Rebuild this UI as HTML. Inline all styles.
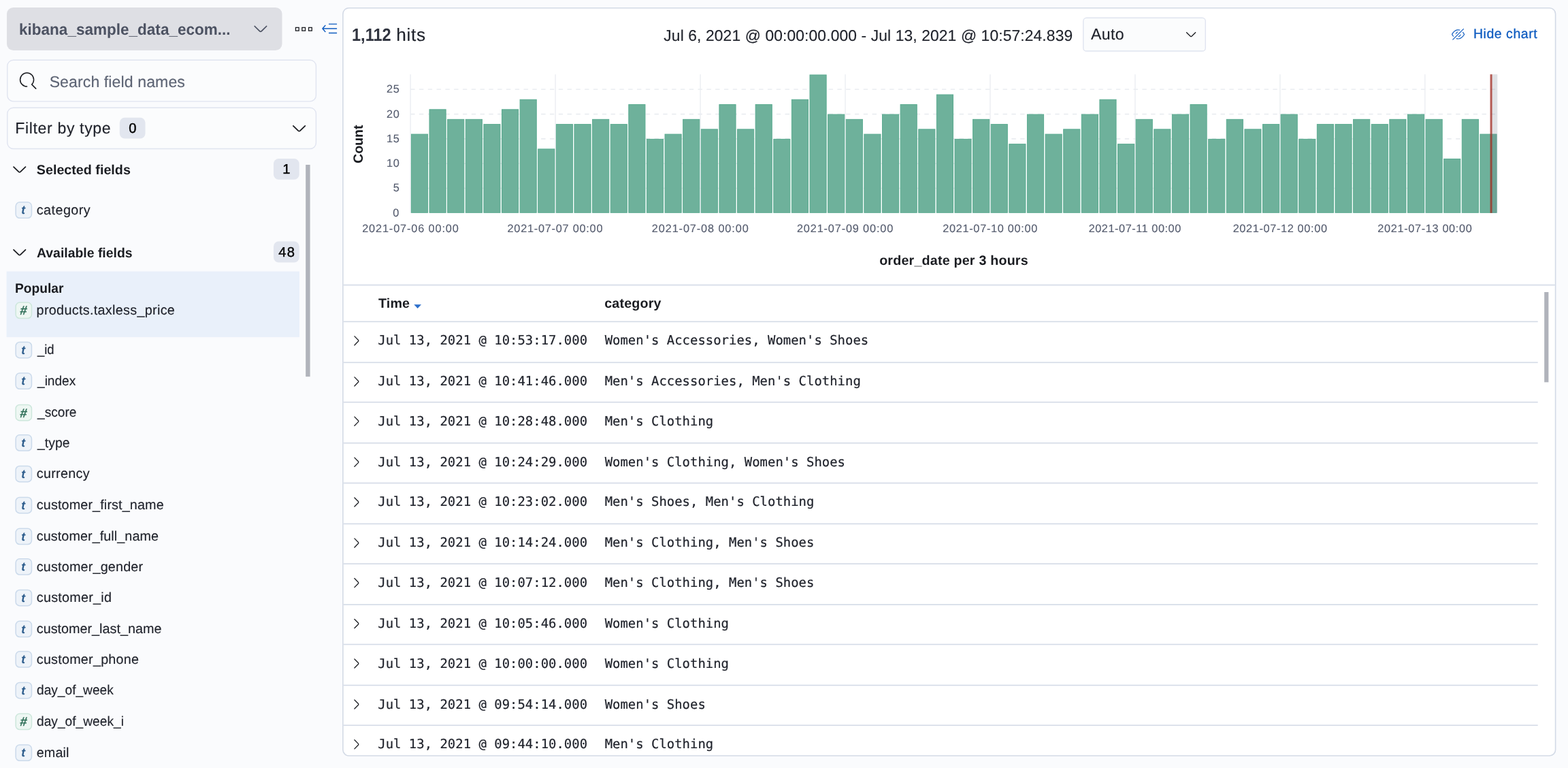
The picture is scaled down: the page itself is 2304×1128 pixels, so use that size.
<!DOCTYPE html>
<html lang="en"><head><meta charset="utf-8"><title>Discover - Kibana</title>
<style>
html,body{margin:0;padding:0}
body{width:2304px;height:1128px;overflow:hidden;background:#fafbfd;position:relative;font-family:"Liberation Sans", sans-serif}
#app{position:absolute;left:0;top:0;width:2304px;height:1128px;overflow:hidden;will-change:transform}
.t{position:absolute;white-space:pre;line-height:1;text-rendering:geometricPrecision}
.g{display:contents}
svg{position:absolute;left:0;top:0;overflow:visible}
.f0{font-family:"Liberation Sans", sans-serif;font-size:23.1px;color:#4c5262;font-weight:700;}
.f1{font-family:"Liberation Sans", sans-serif;font-size:23.1px;color:#5e6575;}
.f2{font-family:"Liberation Sans", sans-serif;font-size:23.1px;color:#1e212a;}
.f3{font-family:"Liberation Sans", sans-serif;font-size:20.2px;color:#000;}
.f4{font-family:"Liberation Sans", sans-serif;font-size:19.7px;color:#1a1c21;font-weight:700;}
.f5{font-family:"Liberation Sans", sans-serif;font-size:19.8px;color:#1e212a;}
.f6{font-family:"Liberation Sans", sans-serif;font-size:17.5px;color:#2c5c8c;font-weight:700;font-style:italic;}
.f7{font-family:"Liberation Sans", sans-serif;font-size:18.4px;color:#2f6f58;font-weight:700;font-style:italic;}
.f8{font-family:"Liberation Sans", sans-serif;font-size:26.2px;color:#30343f;font-weight:700;}
.f9{font-family:"Liberation Sans", sans-serif;font-size:26.2px;color:#1e212a;}
.f10{font-family:"Liberation Sans", sans-serif;font-size:22.8px;color:#1e212a;}
.f11{font-family:"Liberation Sans", sans-serif;font-size:19.5px;color:#0f5cc0;}
.f12{font-family:"Liberation Sans", sans-serif;font-size:16.3px;color:#575e70;}
.f13{font-family:"DejaVu Sans Mono", "Liberation Mono", monospace;font-size:18.9px;color:#1e212a;}

</style></head>
<body>
<div id="app">
<svg width="2304" height="1128" viewBox="0 0 2304 1128">
<rect x="10" y="11" width="404.5" height="63" rx="9.6" fill="#dedfe4"/>
<path transform="translate(370.10 29.65) scale(1.6)" d="M13.069 5.157L8.384 9.768a.546.546 0 01-.768 0L2.93 5.158a.552.552 0 00-.771 0 .53.53 0 000 .759l4.684 4.61c.641.631 1.672.63 2.312 0l4.684-4.61a.53.53 0 000-.76.552.552 0 00-.771 0z" fill="#4c5262"/>
<rect x="434.45" y="40.45" width="4.7" height="4.7" fill="none" stroke="#1a1c21" stroke-width="1.3"/>
<rect x="443.85" y="40.45" width="4.7" height="4.7" fill="none" stroke="#1a1c21" stroke-width="1.3"/>
<rect x="453.55" y="40.45" width="4.7" height="4.7" fill="none" stroke="#1a1c21" stroke-width="1.3"/>
<path d="M483 35.4H495.1M474.4 42H495.1M483 48.5H495.1M478.3 37L473.9 42L478.3 47" fill="none" stroke="#0f5cc0" stroke-width="1.35" stroke-linejoin="round"/>
<rect x="10.8" y="88.3" width="453.6" height="60.6" rx="8.8" fill="#fbfcfd" stroke="#e0e4f0" stroke-width="1.4"/>
<path transform="translate(28.85 106.28) scale(1.54)" d="M11.271 11.978l3.872 3.873a.502.502 0 00.708 0 .502.502 0 000-.708l-3.565-3.564c2.38-2.747 2.267-6.923-.342-9.532-2.73-2.73-7.17-2.73-9.898 0-2.728 2.729-2.728 7.17 0 9.9a6.955 6.955 0 004.949 2.05.5.5 0 000-1 5.96 5.96 0 01-4.242-1.757 6.01 6.01 0 010-8.486 6.004 6.004 0 018.484 0 6.01 6.01 0 010 8.486.5.5 0 00.034.738z" fill="#1a1c21"/>
<rect x="10.8" y="158.3" width="453.6" height="60.2" rx="8.8" fill="#fbfcfd" stroke="#e0e4f0" stroke-width="1.4"/>
<rect x="175.8" y="172.7" width="37.7" height="30.8" rx="7.5" fill="#e2e6ef"/>
<path transform="translate(426.80 175.95) scale(1.6)" d="M13.069 5.157L8.384 9.768a.546.546 0 01-.768 0L2.93 5.158a.552.552 0 00-.771 0 .53.53 0 000 .759l4.684 4.61c.641.631 1.672.63 2.312 0l4.684-4.61a.53.53 0 000-.76.552.552 0 00-.771 0z" fill="#1a1c21"/>
<path transform="translate(15.95 236.20) scale(1.6)" d="M13.069 5.157L8.384 9.768a.546.546 0 01-.768 0L2.93 5.158a.552.552 0 00-.771 0 .53.53 0 000 .759l4.684 4.61c.641.631 1.672.63 2.312 0l4.684-4.61a.53.53 0 000-.76.552.552 0 00-.771 0z" fill="#1a1c21"/>
<rect x="402" y="233" width="37.7" height="30.8" rx="7.5" fill="#e2e6ef"/>
<path transform="translate(15.95 357.95) scale(1.6)" d="M13.069 5.157L8.384 9.768a.546.546 0 01-.768 0L2.93 5.158a.552.552 0 00-.771 0 .53.53 0 000 .759l4.684 4.61c.641.631 1.672.63 2.312 0l4.684-4.61a.53.53 0 000-.76.552.552 0 00-.771 0z" fill="#1a1c21"/>
<rect x="402" y="354.6" width="37.7" height="30.8" rx="7.5" fill="#e2e6ef"/>
<rect x="449.2" y="242" width="6.4" height="311.2" fill="#b0b3bb"/>
<rect x="9.6" y="398.6" width="430.4" height="96.6" fill="#e9f0fa"/>
<rect x="23.15" y="297.05" width="23.3" height="23.3" rx="5.8" fill="#eef3f9" stroke="#cbdaeb" stroke-width="1.5"/>
<rect x="23.15" y="444.25" width="23.3" height="23.3" rx="5.8" fill="#eef7f3" stroke="#cde7dc" stroke-width="1.5"/>
<rect x="23.15" y="502.45" width="23.3" height="23.3" rx="5.8" fill="#eef3f9" stroke="#cbdaeb" stroke-width="1.5"/>
<rect x="23.15" y="548.05" width="23.3" height="23.3" rx="5.8" fill="#eef3f9" stroke="#cbdaeb" stroke-width="1.5"/>
<rect x="23.15" y="594.45" width="23.3" height="23.3" rx="5.8" fill="#eef7f3" stroke="#cde7dc" stroke-width="1.5"/>
<rect x="23.15" y="638.75" width="23.3" height="23.3" rx="5.8" fill="#eef3f9" stroke="#cbdaeb" stroke-width="1.5"/>
<rect x="23.15" y="684.45" width="23.3" height="23.3" rx="5.8" fill="#eef3f9" stroke="#cbdaeb" stroke-width="1.5"/>
<rect x="23.15" y="730.45" width="23.3" height="23.3" rx="5.8" fill="#eef3f9" stroke="#cbdaeb" stroke-width="1.5"/>
<rect x="23.15" y="776.25" width="23.3" height="23.3" rx="5.8" fill="#eef3f9" stroke="#cbdaeb" stroke-width="1.5"/>
<rect x="23.15" y="820.75" width="23.3" height="23.3" rx="5.8" fill="#eef3f9" stroke="#cbdaeb" stroke-width="1.5"/>
<rect x="23.15" y="866.45" width="23.3" height="23.3" rx="5.8" fill="#eef3f9" stroke="#cbdaeb" stroke-width="1.5"/>
<rect x="23.15" y="912.25" width="23.3" height="23.3" rx="5.8" fill="#eef3f9" stroke="#cbdaeb" stroke-width="1.5"/>
<rect x="23.15" y="956.75" width="23.3" height="23.3" rx="5.8" fill="#eef3f9" stroke="#cbdaeb" stroke-width="1.5"/>
<rect x="23.15" y="1002.45" width="23.3" height="23.3" rx="5.8" fill="#eef3f9" stroke="#cbdaeb" stroke-width="1.5"/>
<rect x="23.15" y="1048.25" width="23.3" height="23.3" rx="5.8" fill="#eef7f3" stroke="#cde7dc" stroke-width="1.5"/>
<rect x="23.15" y="1094.05" width="23.3" height="23.3" rx="5.8" fill="#eef3f9" stroke="#cbdaeb" stroke-width="1.5"/>
<rect x="503.9" y="11.7" width="1781.7" height="1098.3" rx="8.8" fill="#fff" stroke="#d3dae6" stroke-width="1.6"/>
<rect x="1591.8" y="26.3" width="179.5" height="48.7" rx="4.6" fill="#fbfcfd" stroke="#e0e4f0" stroke-width="1.4"/>
<path transform="translate(1740.50 41.05) scale(1.2)" d="M13.069 5.157L8.384 9.768a.546.546 0 01-.768 0L2.93 5.158a.552.552 0 00-.771 0 .53.53 0 000 .759l4.684 4.61c.641.631 1.672.63 2.312 0l4.684-4.61a.53.53 0 000-.76.552.552 0 00-.771 0z" fill="#1a1c21"/>
<path transform="translate(2133.00 40.80) scale(1.2)" d="m5.318 13.47.776-.776A6.04 6.04 0 0 0 8 13c1.999 0 3.74-.956 5.225-2.587A12.097 12.097 0 0 0 14.926 8a12.097 12.097 0 0 0-1.701-2.413l-.011-.012.707-.708c1.359 1.476 2.045 2.976 2.058 3.006.014.03.021.064.021.098v.06a.24.24 0 0 1-.02.097C15.952 8.188 13.291 14 8 14a7.03 7.03 0 0 1-2.682-.53ZM2.04 11.092C.707 9.629.034 8.158.02 8.128A.24.24 0 0 1 0 8.03v-.059c0-.034.007-.068.02-.098C.048 7.813 2.709 2 8 2c.962 0 1.837.192 2.625.507l-.78.78A6.039 6.039 0 0 0 8 3c-2 0-3.74.956-5.225 2.587a12.098 12.098 0 0 0-1.701 2.414 12.11 12.11 0 0 0 1.674 2.383l-.708.708ZM8.362 4.77 7.255 5.877a2.262 2.262 0 0 0-1.378 1.378L4.77 8.362A3.252 3.252 0 0 1 8.362 4.77Zm2.86 2.797a3.254 3.254 0 0 1-3.654 3.654l1.06-1.06a2.262 2.262 0 0 0 1.533-1.533l1.06-1.06Zm-9.368 7.287a.5.5 0 0 1-.708-.708l13-13a.5.5 0 0 1 .708.708l-13 13Z" fill="#0f5cc0"/>
<rect x="602.35" y="109.2" width="1.6" height="203.60" fill="#eef0f4"/>
<rect x="815.30" y="109.2" width="1.6" height="203.60" fill="#eef0f4"/>
<rect x="1028.26" y="109.2" width="1.6" height="203.60" fill="#eef0f4"/>
<rect x="1241.21" y="109.2" width="1.6" height="203.60" fill="#eef0f4"/>
<rect x="1454.16" y="109.2" width="1.6" height="203.60" fill="#eef0f4"/>
<rect x="1667.12" y="109.2" width="1.6" height="203.60" fill="#eef0f4"/>
<rect x="1880.07" y="109.2" width="1.6" height="203.60" fill="#eef0f4"/>
<rect x="2093.02" y="109.2" width="1.6" height="203.60" fill="#eef0f4"/>
<path d="M603.15 276.50H2200.30" stroke="#eaedf1" stroke-width="1.6" stroke-dasharray="6.4 6.4" fill="none"/>
<path d="M603.15 240.20H2200.30" stroke="#eaedf1" stroke-width="1.6" stroke-dasharray="6.4 6.4" fill="none"/>
<path d="M603.15 203.90H2200.30" stroke="#eaedf1" stroke-width="1.6" stroke-dasharray="6.4 6.4" fill="none"/>
<path d="M603.15 167.60H2200.30" stroke="#eaedf1" stroke-width="1.6" stroke-dasharray="6.4 6.4" fill="none"/>
<path d="M603.15 131.30H2200.30" stroke="#eaedf1" stroke-width="1.6" stroke-dasharray="6.4 6.4" fill="none"/>
<rect x="604.40" y="197.14" width="24.12" height="115.16" fill="#6eb19b" stroke="#5aab90" stroke-width="1"/>
<rect x="631.02" y="160.84" width="24.12" height="151.46" fill="#6eb19b" stroke="#5aab90" stroke-width="1"/>
<rect x="657.64" y="175.36" width="24.12" height="136.94" fill="#6eb19b" stroke="#5aab90" stroke-width="1"/>
<rect x="684.26" y="175.36" width="24.12" height="136.94" fill="#6eb19b" stroke="#5aab90" stroke-width="1"/>
<rect x="710.88" y="182.62" width="24.12" height="129.68" fill="#6eb19b" stroke="#5aab90" stroke-width="1"/>
<rect x="737.50" y="160.84" width="24.12" height="151.46" fill="#6eb19b" stroke="#5aab90" stroke-width="1"/>
<rect x="764.12" y="146.32" width="24.12" height="165.98" fill="#6eb19b" stroke="#5aab90" stroke-width="1"/>
<rect x="790.73" y="218.92" width="24.12" height="93.38" fill="#6eb19b" stroke="#5aab90" stroke-width="1"/>
<rect x="817.35" y="182.62" width="24.12" height="129.68" fill="#6eb19b" stroke="#5aab90" stroke-width="1"/>
<rect x="843.97" y="182.62" width="24.12" height="129.68" fill="#6eb19b" stroke="#5aab90" stroke-width="1"/>
<rect x="870.59" y="175.36" width="24.12" height="136.94" fill="#6eb19b" stroke="#5aab90" stroke-width="1"/>
<rect x="897.21" y="182.62" width="24.12" height="129.68" fill="#6eb19b" stroke="#5aab90" stroke-width="1"/>
<rect x="923.83" y="153.58" width="24.12" height="158.72" fill="#6eb19b" stroke="#5aab90" stroke-width="1"/>
<rect x="950.45" y="204.40" width="24.12" height="107.90" fill="#6eb19b" stroke="#5aab90" stroke-width="1"/>
<rect x="977.07" y="197.14" width="24.12" height="115.16" fill="#6eb19b" stroke="#5aab90" stroke-width="1"/>
<rect x="1003.69" y="175.36" width="24.12" height="136.94" fill="#6eb19b" stroke="#5aab90" stroke-width="1"/>
<rect x="1030.31" y="189.88" width="24.12" height="122.42" fill="#6eb19b" stroke="#5aab90" stroke-width="1"/>
<rect x="1056.93" y="153.58" width="24.12" height="158.72" fill="#6eb19b" stroke="#5aab90" stroke-width="1"/>
<rect x="1083.55" y="189.88" width="24.12" height="122.42" fill="#6eb19b" stroke="#5aab90" stroke-width="1"/>
<rect x="1110.16" y="153.58" width="24.12" height="158.72" fill="#6eb19b" stroke="#5aab90" stroke-width="1"/>
<rect x="1136.78" y="204.40" width="24.12" height="107.90" fill="#6eb19b" stroke="#5aab90" stroke-width="1"/>
<rect x="1163.40" y="146.32" width="24.12" height="165.98" fill="#6eb19b" stroke="#5aab90" stroke-width="1"/>
<rect x="1190.02" y="110.02" width="24.12" height="202.28" fill="#6eb19b" stroke="#5aab90" stroke-width="1"/>
<rect x="1216.64" y="168.10" width="24.12" height="144.20" fill="#6eb19b" stroke="#5aab90" stroke-width="1"/>
<rect x="1243.26" y="175.36" width="24.12" height="136.94" fill="#6eb19b" stroke="#5aab90" stroke-width="1"/>
<rect x="1269.88" y="197.14" width="24.12" height="115.16" fill="#6eb19b" stroke="#5aab90" stroke-width="1"/>
<rect x="1296.50" y="168.10" width="24.12" height="144.20" fill="#6eb19b" stroke="#5aab90" stroke-width="1"/>
<rect x="1323.12" y="153.58" width="24.12" height="158.72" fill="#6eb19b" stroke="#5aab90" stroke-width="1"/>
<rect x="1349.74" y="189.88" width="24.12" height="122.42" fill="#6eb19b" stroke="#5aab90" stroke-width="1"/>
<rect x="1376.36" y="139.06" width="24.12" height="173.24" fill="#6eb19b" stroke="#5aab90" stroke-width="1"/>
<rect x="1402.97" y="204.40" width="24.12" height="107.90" fill="#6eb19b" stroke="#5aab90" stroke-width="1"/>
<rect x="1429.59" y="175.36" width="24.12" height="136.94" fill="#6eb19b" stroke="#5aab90" stroke-width="1"/>
<rect x="1456.21" y="182.62" width="24.12" height="129.68" fill="#6eb19b" stroke="#5aab90" stroke-width="1"/>
<rect x="1482.83" y="211.66" width="24.12" height="100.64" fill="#6eb19b" stroke="#5aab90" stroke-width="1"/>
<rect x="1509.45" y="168.10" width="24.12" height="144.20" fill="#6eb19b" stroke="#5aab90" stroke-width="1"/>
<rect x="1536.07" y="197.14" width="24.12" height="115.16" fill="#6eb19b" stroke="#5aab90" stroke-width="1"/>
<rect x="1562.69" y="189.88" width="24.12" height="122.42" fill="#6eb19b" stroke="#5aab90" stroke-width="1"/>
<rect x="1589.31" y="168.10" width="24.12" height="144.20" fill="#6eb19b" stroke="#5aab90" stroke-width="1"/>
<rect x="1615.93" y="146.32" width="24.12" height="165.98" fill="#6eb19b" stroke="#5aab90" stroke-width="1"/>
<rect x="1642.55" y="211.66" width="24.12" height="100.64" fill="#6eb19b" stroke="#5aab90" stroke-width="1"/>
<rect x="1669.17" y="175.36" width="24.12" height="136.94" fill="#6eb19b" stroke="#5aab90" stroke-width="1"/>
<rect x="1695.79" y="189.88" width="24.12" height="122.42" fill="#6eb19b" stroke="#5aab90" stroke-width="1"/>
<rect x="1722.41" y="168.10" width="24.12" height="144.20" fill="#6eb19b" stroke="#5aab90" stroke-width="1"/>
<rect x="1749.02" y="153.58" width="24.12" height="158.72" fill="#6eb19b" stroke="#5aab90" stroke-width="1"/>
<rect x="1775.64" y="204.40" width="24.12" height="107.90" fill="#6eb19b" stroke="#5aab90" stroke-width="1"/>
<rect x="1802.26" y="175.36" width="24.12" height="136.94" fill="#6eb19b" stroke="#5aab90" stroke-width="1"/>
<rect x="1828.88" y="189.88" width="24.12" height="122.42" fill="#6eb19b" stroke="#5aab90" stroke-width="1"/>
<rect x="1855.50" y="182.62" width="24.12" height="129.68" fill="#6eb19b" stroke="#5aab90" stroke-width="1"/>
<rect x="1882.12" y="168.10" width="24.12" height="144.20" fill="#6eb19b" stroke="#5aab90" stroke-width="1"/>
<rect x="1908.74" y="204.40" width="24.12" height="107.90" fill="#6eb19b" stroke="#5aab90" stroke-width="1"/>
<rect x="1935.36" y="182.62" width="24.12" height="129.68" fill="#6eb19b" stroke="#5aab90" stroke-width="1"/>
<rect x="1961.98" y="182.62" width="24.12" height="129.68" fill="#6eb19b" stroke="#5aab90" stroke-width="1"/>
<rect x="1988.60" y="175.36" width="24.12" height="136.94" fill="#6eb19b" stroke="#5aab90" stroke-width="1"/>
<rect x="2015.22" y="182.62" width="24.12" height="129.68" fill="#6eb19b" stroke="#5aab90" stroke-width="1"/>
<rect x="2041.84" y="175.36" width="24.12" height="136.94" fill="#6eb19b" stroke="#5aab90" stroke-width="1"/>
<rect x="2068.45" y="168.10" width="24.12" height="144.20" fill="#6eb19b" stroke="#5aab90" stroke-width="1"/>
<rect x="2095.07" y="175.36" width="24.12" height="136.94" fill="#6eb19b" stroke="#5aab90" stroke-width="1"/>
<rect x="2121.69" y="233.44" width="24.12" height="78.86" fill="#6eb19b" stroke="#5aab90" stroke-width="1"/>
<rect x="2148.31" y="175.36" width="24.12" height="136.94" fill="#6eb19b" stroke="#5aab90" stroke-width="1"/>
<rect x="2174.93" y="197.14" width="24.12" height="115.16" fill="#6eb19b" stroke="#5aab90" stroke-width="1"/>
<rect x="2191.05" y="109.2" width="9.25" height="203.60" fill="rgba(105,112,125,0.2)"/>
<rect x="2189.55" y="109.2" width="3" height="203.60" fill="rgba(160,40,30,0.75)"/>
<rect x="504.7" y="417.8" width="1780.1" height="1.6" fill="#d3dae6"/>
<rect x="504.7" y="471.60" width="1755" height="1.6" fill="#d3dae6"/>
<path transform="translate(514.25 490.80) scale(1.2)" d="M5.157 13.069l4.611-4.685a.546.546 0 000-.768L5.158 2.93a.552.552 0 010-.771.53.53 0 01.759 0l4.61 4.684c.631.641.63 1.672 0 2.312l-4.61 4.684a.53.53 0 01-.76 0 .552.552 0 010-.771z" fill="#1a1c21"/>
<rect x="504.7" y="531.60" width="1755" height="1.6" fill="#d3dae6"/>
<path transform="translate(514.25 550.80) scale(1.2)" d="M5.157 13.069l4.611-4.685a.546.546 0 000-.768L5.158 2.93a.552.552 0 010-.771.53.53 0 01.759 0l4.61 4.684c.631.641.63 1.672 0 2.312l-4.61 4.684a.53.53 0 01-.76 0 .552.552 0 010-.771z" fill="#1a1c21"/>
<rect x="504.7" y="589.90" width="1755" height="1.6" fill="#d3dae6"/>
<path transform="translate(514.25 609.10) scale(1.2)" d="M5.157 13.069l4.611-4.685a.546.546 0 000-.768L5.158 2.93a.552.552 0 010-.771.53.53 0 01.759 0l4.61 4.684c.631.641.63 1.672 0 2.312l-4.61 4.684a.53.53 0 01-.76 0 .552.552 0 010-.771z" fill="#1a1c21"/>
<rect x="504.7" y="649.90" width="1755" height="1.6" fill="#d3dae6"/>
<path transform="translate(514.25 669.10) scale(1.2)" d="M5.157 13.069l4.611-4.685a.546.546 0 000-.768L5.158 2.93a.552.552 0 010-.771.53.53 0 01.759 0l4.61 4.684c.631.641.63 1.672 0 2.312l-4.61 4.684a.53.53 0 01-.76 0 .552.552 0 010-.771z" fill="#1a1c21"/>
<rect x="504.7" y="708.70" width="1755" height="1.6" fill="#d3dae6"/>
<path transform="translate(514.25 727.90) scale(1.2)" d="M5.157 13.069l4.611-4.685a.546.546 0 000-.768L5.158 2.93a.552.552 0 010-.771.53.53 0 01.759 0l4.61 4.684c.631.641.63 1.672 0 2.312l-4.61 4.684a.53.53 0 01-.76 0 .552.552 0 010-.771z" fill="#1a1c21"/>
<rect x="504.7" y="768.60" width="1755" height="1.6" fill="#d3dae6"/>
<path transform="translate(514.25 787.80) scale(1.2)" d="M5.157 13.069l4.611-4.685a.546.546 0 000-.768L5.158 2.93a.552.552 0 010-.771.53.53 0 01.759 0l4.61 4.684c.631.641.63 1.672 0 2.312l-4.61 4.684a.53.53 0 01-.76 0 .552.552 0 010-.771z" fill="#1a1c21"/>
<rect x="504.7" y="827.30" width="1755" height="1.6" fill="#d3dae6"/>
<path transform="translate(514.25 846.50) scale(1.2)" d="M5.157 13.069l4.611-4.685a.546.546 0 000-.768L5.158 2.93a.552.552 0 010-.771.53.53 0 01.759 0l4.61 4.684c.631.641.63 1.672 0 2.312l-4.61 4.684a.53.53 0 01-.76 0 .552.552 0 010-.771z" fill="#1a1c21"/>
<rect x="504.7" y="887.20" width="1755" height="1.6" fill="#d3dae6"/>
<path transform="translate(514.25 906.40) scale(1.2)" d="M5.157 13.069l4.611-4.685a.546.546 0 000-.768L5.158 2.93a.552.552 0 010-.771.53.53 0 01.759 0l4.61 4.684c.631.641.63 1.672 0 2.312l-4.61 4.684a.53.53 0 01-.76 0 .552.552 0 010-.771z" fill="#1a1c21"/>
<rect x="504.7" y="945.70" width="1755" height="1.6" fill="#d3dae6"/>
<path transform="translate(514.25 964.90) scale(1.2)" d="M5.157 13.069l4.611-4.685a.546.546 0 000-.768L5.158 2.93a.552.552 0 010-.771.53.53 0 01.759 0l4.61 4.684c.631.641.63 1.672 0 2.312l-4.61 4.684a.53.53 0 01-.76 0 .552.552 0 010-.771z" fill="#1a1c21"/>
<rect x="504.7" y="1005.70" width="1755" height="1.6" fill="#d3dae6"/>
<path transform="translate(514.25 1024.90) scale(1.2)" d="M5.157 13.069l4.611-4.685a.546.546 0 000-.768L5.158 2.93a.552.552 0 010-.771.53.53 0 01.759 0l4.61 4.684c.631.641.63 1.672 0 2.312l-4.61 4.684a.53.53 0 01-.76 0 .552.552 0 010-.771z" fill="#1a1c21"/>
<rect x="504.7" y="1064.50" width="1755" height="1.6" fill="#d3dae6"/>
<path transform="translate(514.25 1083.70) scale(1.2)" d="M5.157 13.069l4.611-4.685a.546.546 0 000-.768L5.158 2.93a.552.552 0 010-.771.53.53 0 01.759 0l4.61 4.684c.631.641.63 1.672 0 2.312l-4.61 4.684a.53.53 0 01-.76 0 .552.552 0 010-.771z" fill="#1a1c21"/>
<path d="M608.3 447.3H619L613.65 453Z" fill="#2c6fcb"/>
<rect x="2269.2" y="429" width="6.2" height="132.4" fill="#b0b3bb"/>
</svg>
<aside class="g" aria-label="Field list">
<span class="t f0" style="left:27.63px;top:32px;transform:scaleX(0.9756);transform-origin:0 0;">kibana_sample_data_ecom...</span>
<span class="t f1" style="left:72.64px;top:109px;letter-spacing:0.092px;-webkit-text-stroke:0.15px #5e6575;">Search field names</span>
<span class="t f2" style="left:22.37px;top:177px;letter-spacing:0.619px;-webkit-text-stroke:0.15px #1e212a;">Filter by type</span>
<span class="t f3" style="left:189.31px;top:179px;-webkit-text-stroke:0.45px #000;">0</span>
<span class="t f4" style="left:53.8px;top:241px;letter-spacing:0.012px;">Selected fields</span>
<span class="t f3" style="left:415.14px;top:239px;-webkit-text-stroke:0.45px #000;">1</span>
<span class="t f4" style="left:53.93px;top:363px;transform:scaleX(0.9857);transform-origin:0 0;">Available fields</span>
<span class="t f3" style="left:409.2px;top:361px;letter-spacing:1.298px;-webkit-text-stroke:0.45px #000;">48</span>
<span class="t f4" style="left:21.64px;top:415px;transform:scaleX(0.9742);transform-origin:0 0;">Popular</span>
<span class="t f5" style="left:53.77px;top:300px;letter-spacing:0.431px;-webkit-text-stroke:0.15px #1e212a;">category</span>
<span class="t f6" style="left:31.18px;top:300px;">t</span>
<span class="t f5" style="left:53.62px;top:447px;letter-spacing:0.306px;-webkit-text-stroke:0.15px #1e212a;">products.taxless_price</span>
<span class="t f7" style="left:29.28px;top:447px;transform:skewX(-8deg);transform-origin:50% 60%;-webkit-text-stroke:0.25px #2f6f58;">#</span>
<span class="t f5" style="left:54.87px;top:505px;transform:scaleX(0.9333);transform-origin:0 0;-webkit-text-stroke:0.15px #1e212a;">_id</span>
<span class="t f6" style="left:31.18px;top:506px;">t</span>
<span class="t f5" style="left:54.88px;top:551px;transform:scaleX(0.9659);transform-origin:0 0;-webkit-text-stroke:0.15px #1e212a;">_index</span>
<span class="t f6" style="left:31.18px;top:551px;">t</span>
<span class="t f5" style="left:54.88px;top:597px;transform:scaleX(0.9689);transform-origin:0 0;-webkit-text-stroke:0.15px #1e212a;">_score</span>
<span class="t f7" style="left:29.28px;top:598px;transform:skewX(-8deg);transform-origin:50% 60%;-webkit-text-stroke:0.25px #2f6f58;">#</span>
<span class="t f5" style="left:54.88px;top:642px;transform:scaleX(0.9811);transform-origin:0 0;-webkit-text-stroke:0.15px #1e212a;">_type</span>
<span class="t f6" style="left:31.18px;top:642px;">t</span>
<span class="t f5" style="left:53.77px;top:687px;letter-spacing:0.288px;-webkit-text-stroke:0.15px #1e212a;">currency</span>
<span class="t f6" style="left:31.18px;top:688px;">t</span>
<span class="t f5" style="left:53.77px;top:733px;letter-spacing:0.125px;-webkit-text-stroke:0.15px #1e212a;">customer_first_name</span>
<span class="t f6" style="left:31.18px;top:734px;">t</span>
<span class="t f5" style="left:53.77px;top:779px;letter-spacing:0.069px;-webkit-text-stroke:0.15px #1e212a;">customer_full_name</span>
<span class="t f6" style="left:31.18px;top:780px;">t</span>
<span class="t f5" style="left:53.77px;top:824px;letter-spacing:0.17px;-webkit-text-stroke:0.15px #1e212a;">customer_gender</span>
<span class="t f6" style="left:31.18px;top:824px;">t</span>
<span class="t f5" style="left:53.77px;top:869px;letter-spacing:0.239px;-webkit-text-stroke:0.15px #1e212a;">customer_id</span>
<span class="t f6" style="left:31.18px;top:870px;">t</span>
<span class="t f5" style="left:53.77px;top:915px;-webkit-text-stroke:0.15px #1e212a;">customer_last_name</span>
<span class="t f6" style="left:31.18px;top:916px;">t</span>
<span class="t f5" style="left:53.77px;top:960px;letter-spacing:0.224px;-webkit-text-stroke:0.15px #1e212a;">customer_phone</span>
<span class="t f6" style="left:31.18px;top:960px;">t</span>
<span class="t f5" style="left:53.83px;top:1005px;transform:scaleX(0.9672);transform-origin:0 0;-webkit-text-stroke:0.15px #1e212a;">day_of_week</span>
<span class="t f6" style="left:31.18px;top:1006px;">t</span>
<span class="t f5" style="left:53.82px;top:1051px;transform:scaleX(0.9691);transform-origin:0 0;-webkit-text-stroke:0.15px #1e212a;">day_of_week_i</span>
<span class="t f7" style="left:29.28px;top:1051px;transform:skewX(-8deg);transform-origin:50% 60%;-webkit-text-stroke:0.25px #2f6f58;">#</span>
<span class="t f5" style="left:53.77px;top:1097px;letter-spacing:0.104px;-webkit-text-stroke:0.15px #1e212a;">email</span>
<span class="t f6" style="left:31.18px;top:1097px;">t</span>
</aside>
<header class="g" aria-label="Result summary">
<span class="t f8" style="left:517.01px;top:38px;transform:scaleX(0.899);transform-origin:0 0;">1,112</span>
<span class="t f9" style="left:582.13px;top:38px;letter-spacing:0.703px;-webkit-text-stroke:0.15px #1e212a;">hits</span>
<span class="t f10" style="left:975.3px;top:41px;letter-spacing:0.127px;-webkit-text-stroke:0.15px #1e212a;">Jul 6, 2021 @ 00:00:00.000 - Jul 13, 2021 @ 10:57:24.839</span>
<span class="t f2" style="left:1602.94px;top:39px;letter-spacing:0.351px;-webkit-text-stroke:0.15px #1e212a;">Auto</span>
<span class="t f11" style="left:2164.9px;top:41px;letter-spacing:0.538px;-webkit-text-stroke:0.3px #0f5cc0;">Hide chart</span>
</header>
<section class="g" aria-label="Histogram">
<span class="t f12" style="left:577.19px;top:305px;letter-spacing:0.5px;-webkit-text-stroke:0.15px #575e70;">0</span>
<span class="t f12" style="left:577.76px;top:268px;letter-spacing:0.5px;-webkit-text-stroke:0.15px #575e70;">5</span>
<span class="t f12" style="left:568.08px;top:232px;letter-spacing:0.5px;-webkit-text-stroke:0.15px #575e70;">10</span>
<span class="t f12" style="left:568.1px;top:196px;letter-spacing:0.5px;-webkit-text-stroke:0.15px #575e70;">15</span>
<span class="t f12" style="left:568.08px;top:160px;letter-spacing:0.5px;-webkit-text-stroke:0.15px #575e70;">20</span>
<span class="t f12" style="left:568.1px;top:123px;letter-spacing:0.5px;-webkit-text-stroke:0.15px #575e70;">25</span>
<span class="t f12" style="left:532.13px;top:328px;letter-spacing:0.874px;-webkit-text-stroke:0.15px #575e70;">2021-07-06 00:00</span>
<span class="t f12" style="left:745.53px;top:328px;letter-spacing:0.759px;-webkit-text-stroke:0.15px #575e70;">2021-07-07 00:00</span>
<span class="t f12" style="left:957.83px;top:328px;letter-spacing:0.888px;-webkit-text-stroke:0.15px #575e70;">2021-07-08 00:00</span>
<span class="t f12" style="left:1170.93px;top:328px;letter-spacing:0.852px;-webkit-text-stroke:0.15px #575e70;">2021-07-09 00:00</span>
<span class="t f12" style="left:1385.23px;top:328px;letter-spacing:0.702px;-webkit-text-stroke:0.15px #575e70;">2021-07-10 00:00</span>
<span class="t f12" style="left:1599.63px;top:328px;letter-spacing:0.553px;-webkit-text-stroke:0.15px #575e70;">2021-07-11 00:00</span>
<span class="t f12" style="left:1811.63px;top:328px;letter-spacing:0.652px;-webkit-text-stroke:0.15px #575e70;">2021-07-12 00:00</span>
<span class="t f12" style="left:2024.33px;top:328px;letter-spacing:0.659px;-webkit-text-stroke:0.15px #575e70;">2021-07-13 00:00</span>
<span class="t f4" style="left:1292.13px;top:374px;letter-spacing:0.195px;">order_date per 3 hours</span>
<span class="t f4" style="left:518px;top:240.19px;letter-spacing:-0.064px;transform:rotate(-90deg);transform-origin:0 0;">Count</span>
</section>
<section class="g" aria-label="Documents">
<span class="t f4" style="left:556.04px;top:437px;letter-spacing:0.136px;">Time</span>
<span class="t f4" style="left:888.23px;top:437px;letter-spacing:0.176px;">category</span>
<span class="t f13" style="left:555.29px;top:491px;letter-spacing:0.025px;-webkit-text-stroke:0.22px #1e212a;">Jul 13, 2021 @ 10:53:17.000</span>
<span class="t f13" style="left:888.65px;top:491px;letter-spacing:0.025px;-webkit-text-stroke:0.22px #1e212a;">Women's Accessories, Women's Shoes</span>
<span class="t f13" style="left:555.29px;top:551px;letter-spacing:0.025px;-webkit-text-stroke:0.22px #1e212a;">Jul 13, 2021 @ 10:41:46.000</span>
<span class="t f13" style="left:888.65px;top:551px;letter-spacing:0.025px;-webkit-text-stroke:0.22px #1e212a;">Men's Accessories, Men's Clothing</span>
<span class="t f13" style="left:555.29px;top:610px;letter-spacing:0.025px;-webkit-text-stroke:0.22px #1e212a;">Jul 13, 2021 @ 10:28:48.000</span>
<span class="t f13" style="left:888.65px;top:610px;letter-spacing:0.025px;-webkit-text-stroke:0.22px #1e212a;">Men's Clothing</span>
<span class="t f13" style="left:555.29px;top:670px;letter-spacing:0.025px;-webkit-text-stroke:0.22px #1e212a;">Jul 13, 2021 @ 10:24:29.000</span>
<span class="t f13" style="left:888.65px;top:670px;letter-spacing:0.025px;-webkit-text-stroke:0.22px #1e212a;">Women's Clothing, Women's Shoes</span>
<span class="t f13" style="left:555.29px;top:728px;letter-spacing:0.025px;-webkit-text-stroke:0.22px #1e212a;">Jul 13, 2021 @ 10:23:02.000</span>
<span class="t f13" style="left:888.65px;top:728px;letter-spacing:0.025px;-webkit-text-stroke:0.22px #1e212a;">Men's Shoes, Men's Clothing</span>
<span class="t f13" style="left:555.29px;top:788px;letter-spacing:0.025px;-webkit-text-stroke:0.22px #1e212a;">Jul 13, 2021 @ 10:14:24.000</span>
<span class="t f13" style="left:888.65px;top:788px;letter-spacing:0.025px;-webkit-text-stroke:0.22px #1e212a;">Men's Clothing, Men's Shoes</span>
<span class="t f13" style="left:555.29px;top:847px;letter-spacing:0.025px;-webkit-text-stroke:0.22px #1e212a;">Jul 13, 2021 @ 10:07:12.000</span>
<span class="t f13" style="left:888.65px;top:847px;letter-spacing:0.025px;-webkit-text-stroke:0.22px #1e212a;">Men's Clothing, Men's Shoes</span>
<span class="t f13" style="left:555.29px;top:907px;letter-spacing:0.025px;-webkit-text-stroke:0.22px #1e212a;">Jul 13, 2021 @ 10:05:46.000</span>
<span class="t f13" style="left:888.65px;top:907px;letter-spacing:0.025px;-webkit-text-stroke:0.22px #1e212a;">Women's Clothing</span>
<span class="t f13" style="left:555.29px;top:966px;letter-spacing:0.025px;-webkit-text-stroke:0.22px #1e212a;">Jul 13, 2021 @ 10:00:00.000</span>
<span class="t f13" style="left:888.65px;top:966px;letter-spacing:0.025px;-webkit-text-stroke:0.22px #1e212a;">Women's Clothing</span>
<span class="t f13" style="left:555.29px;top:1026px;letter-spacing:0.025px;-webkit-text-stroke:0.22px #1e212a;">Jul 13, 2021 @ 09:54:14.000</span>
<span class="t f13" style="left:888.65px;top:1026px;letter-spacing:0.025px;-webkit-text-stroke:0.22px #1e212a;">Women's Shoes</span>
<span class="t f13" style="left:555.29px;top:1084px;letter-spacing:0.025px;-webkit-text-stroke:0.22px #1e212a;">Jul 13, 2021 @ 09:44:10.000</span>
<span class="t f13" style="left:888.65px;top:1084px;letter-spacing:0.025px;-webkit-text-stroke:0.22px #1e212a;">Men's Clothing</span>
</section>
</div>
</body></html>
